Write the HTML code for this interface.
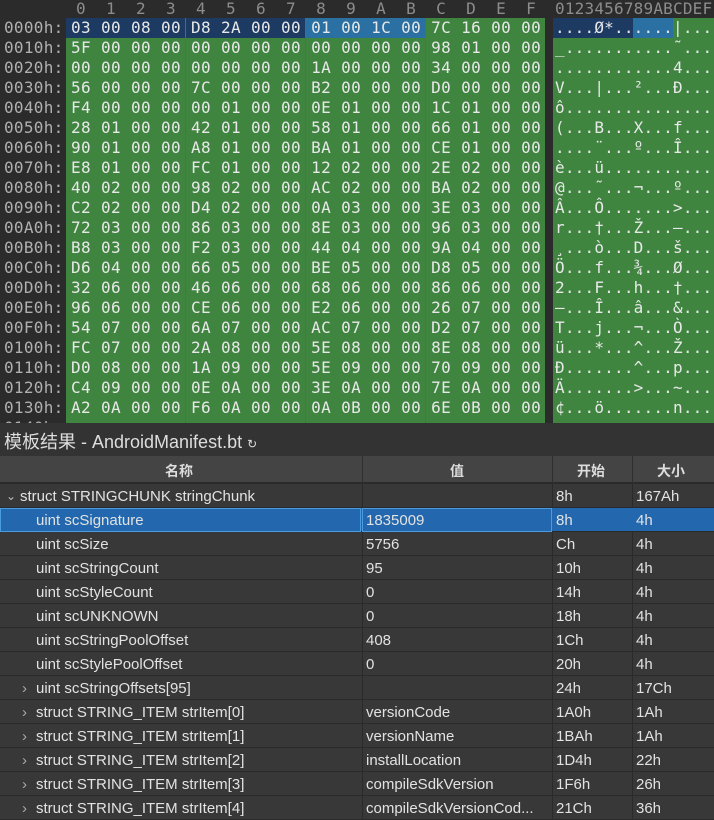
<!DOCTYPE html>
<html><head><meta charset="utf-8"><style>
*{margin:0;padding:0;box-sizing:border-box}
body{width:714px;height:818px;overflow:hidden;background:#2b2b2b;position:relative;font-family:"DejaVu Sans Mono",monospace}
.abs{position:absolute}
.hex{position:absolute;left:71px;font-size:16px;letter-spacing:0.37px;color:#e8e8e8;white-space:pre;line-height:20px}
.off{position:absolute;left:4px;font-size:16px;letter-spacing:0.3px;color:#b0b0b0;white-space:pre;line-height:20px}
.asc{position:absolute;left:555px;font-size:16px;letter-spacing:0.2px;color:#e8e8e8;white-space:pre;line-height:20px}
.t{font-family:"Liberation Sans","Noto Sans CJK SC",sans-serif;font-size:15px;color:#e2e2e2}
.row{position:absolute;left:0;width:714px;height:24px;background:#383838;border-bottom:1px solid #2a2a2a}
.row span{position:absolute;top:4px;white-space:nowrap}
.cl{position:absolute;top:0;width:1px;height:24px;background:#2a2a2a}
</style></head><body>
<div class="abs" style="left:66px;top:18px;width:479px;height:405px;background:#3f8540"></div>
<div class="abs" style="left:553px;top:18px;width:161px;height:405px;background:#3f8540"></div>
<div class="abs" style="left:66px;top:18px;width:239px;height:20px;background:#1d3a63"></div>
<div class="abs" style="left:305px;top:18px;width:120px;height:20px;background:#2b70a3"></div>
<div class="abs" style="left:553px;top:18px;width:80px;height:20px;background:#1d3a63"></div>
<div class="abs" style="left:633px;top:18px;width:40px;height:20px;background:#2b70a3"></div>
<div class="abs" style="left:185px;top:18px;width:1px;height:405px;background:#5a6a5a"></div>
<div class="abs" style="left:305px;top:18px;width:1px;height:405px;background:#5a6a5a"></div>
<div class="abs" style="left:425px;top:18px;width:1px;height:405px;background:#5a6a5a"></div>
<div class="hex" style="top:-1px;left:76px;color:#8c8c8c">0  1  2  3  4  5  6  7  8  9  A  B  C  D  E  F</div>
<div class="asc" style="top:-1px;color:#8c8c8c">0123456789ABCDEF</div>
<div class="off" style="top:18px">0000h:
0010h:
0020h:
0030h:
0040h:
0050h:
0060h:
0070h:
0080h:
0090h:
00A0h:
00B0h:
00C0h:
00D0h:
00E0h:
00F0h:
0100h:
0110h:
0120h:
0130h:
0140h:</div>
<div class="hex" style="top:18px">03 00 08 00 D8 2A 00 00 01 00 1C 00 7C 16 00 00
5F 00 00 00 00 00 00 00 00 00 00 00 98 01 00 00
00 00 00 00 00 00 00 00 1A 00 00 00 34 00 00 00
56 00 00 00 7C 00 00 00 B2 00 00 00 D0 00 00 00
F4 00 00 00 00 01 00 00 0E 01 00 00 1C 01 00 00
28 01 00 00 42 01 00 00 58 01 00 00 66 01 00 00
90 01 00 00 A8 01 00 00 BA 01 00 00 CE 01 00 00
E8 01 00 00 FC 01 00 00 12 02 00 00 2E 02 00 00
40 02 00 00 98 02 00 00 AC 02 00 00 BA 02 00 00
C2 02 00 00 D4 02 00 00 0A 03 00 00 3E 03 00 00
72 03 00 00 86 03 00 00 8E 03 00 00 96 03 00 00
B8 03 00 00 F2 03 00 00 44 04 00 00 9A 04 00 00
D6 04 00 00 66 05 00 00 BE 05 00 00 D8 05 00 00
32 06 00 00 46 06 00 00 68 06 00 00 86 06 00 00
96 06 00 00 CE 06 00 00 E2 06 00 00 26 07 00 00
54 07 00 00 6A 07 00 00 AC 07 00 00 D2 07 00 00
FC 07 00 00 2A 08 00 00 5E 08 00 00 8E 08 00 00
D0 08 00 00 1A 09 00 00 5E 09 00 00 70 09 00 00
C4 09 00 00 0E 0A 00 00 3E 0A 00 00 7E 0A 00 00
A2 0A 00 00 F6 0A 00 00 0A 0B 00 00 6E 0B 00 00</div>
<div class="asc" style="top:18px">....Ø*......|...
_...........˜...
............4...
V...|...²...Ð...
ô...............
(...B...X...f...
....¨...º...Î...
è...ü...........
@...˜...¬...º...
Â...Ô.......>...
r...†...Ž...–...
¸...ò...D...š...
Ö...f...¾...Ø...
2...F...h...†...
–...Î...â...&...
T...j...¬...Ò...
ü...*...^...Ž...
Ð.......^...p...
Ä.......>...~...
¢...ö.......n...</div>
<div class="abs" style="left:0;top:423px;width:714px;height:33px;background:#333"></div>
<div class="abs t" style="left:4px;top:428px;font-size:18px;color:#ddd">模板结果 - AndroidManifest.bt <span style="font-size:12px">↻</span></div>
<div class="abs" style="left:0;top:456px;width:714px;height:27px;background:#444;border-bottom:1px solid #2a2a2a"></div>
<div class="abs t" style="left:165px;top:461px;font-weight:bold;font-size:14px;color:#ddd">名称</div>
<div class="abs t" style="left:450px;top:461px;font-weight:bold;font-size:14px;color:#ddd">值</div>
<div class="abs t" style="left:577px;top:461px;font-weight:bold;font-size:14px;color:#ddd">开始</div>
<div class="abs t" style="left:657px;top:461px;font-weight:bold;font-size:14px;color:#ddd">大小</div>
<div class="abs" style="left:362px;top:456px;width:1px;height:27px;background:#2f2f2f"></div>
<div class="abs" style="left:552px;top:456px;width:1px;height:27px;background:#2f2f2f"></div>
<div class="abs" style="left:632px;top:456px;width:1px;height:27px;background:#2f2f2f"></div>
<div class="abs" style="left:0;top:484px;width:714px;height:334px;font-family:'Liberation Sans',sans-serif;font-size:15px;color:#e2e2e2">
<div class="row" style="top:0"><span style="left:6px;color:#bbb;font-size:12px;top:5px">&#8964;</span><span style="left:20px">struct STRINGCHUNK stringChunk</span><span style="left:556px">8h</span><span style="left:636px">167Ah</span><i class="cl" style="left:362px"></i><i class="cl" style="left:552px"></i><i class="cl" style="left:632px"></i></div>
<div class="row" style="top:24px;background:#2368ae"><div style="position:absolute;left:0;top:0;width:361px;height:24px;border:1px solid #4a9be0"></div><div style="position:absolute;left:362px;top:0;width:190px;height:24px;border:1px solid #4a9be0"></div><span style="left:36px">uint scSignature</span><span style="left:366px">1835009</span><span style="left:556px">8h</span><span style="left:636px">4h</span></div>
<div class="row" style="top:48px"><span style="left:36px">uint scSize</span><span style="left:366px">5756</span><span style="left:556px">Ch</span><span style="left:636px">4h</span><i class="cl" style="left:362px"></i><i class="cl" style="left:552px"></i><i class="cl" style="left:632px"></i></div>
<div class="row" style="top:72px"><span style="left:36px">uint scStringCount</span><span style="left:366px">95</span><span style="left:556px">10h</span><span style="left:636px">4h</span><i class="cl" style="left:362px"></i><i class="cl" style="left:552px"></i><i class="cl" style="left:632px"></i></div>
<div class="row" style="top:96px"><span style="left:36px">uint scStyleCount</span><span style="left:366px">0</span><span style="left:556px">14h</span><span style="left:636px">4h</span><i class="cl" style="left:362px"></i><i class="cl" style="left:552px"></i><i class="cl" style="left:632px"></i></div>
<div class="row" style="top:120px"><span style="left:36px">uint scUNKNOWN</span><span style="left:366px">0</span><span style="left:556px">18h</span><span style="left:636px">4h</span><i class="cl" style="left:362px"></i><i class="cl" style="left:552px"></i><i class="cl" style="left:632px"></i></div>
<div class="row" style="top:144px"><span style="left:36px">uint scStringPoolOffset</span><span style="left:366px">408</span><span style="left:556px">1Ch</span><span style="left:636px">4h</span><i class="cl" style="left:362px"></i><i class="cl" style="left:552px"></i><i class="cl" style="left:632px"></i></div>
<div class="row" style="top:168px"><span style="left:36px">uint scStylePoolOffset</span><span style="left:366px">0</span><span style="left:556px">20h</span><span style="left:636px">4h</span><i class="cl" style="left:362px"></i><i class="cl" style="left:552px"></i><i class="cl" style="left:632px"></i></div>
<div class="row" style="top:192px"><span style="left:22px;color:#aaa">›</span><span style="left:36px">uint scStringOffsets[95]</span><span style="left:556px">24h</span><span style="left:636px">17Ch</span><i class="cl" style="left:362px"></i><i class="cl" style="left:552px"></i><i class="cl" style="left:632px"></i></div>
<div class="row" style="top:216px"><span style="left:22px;color:#aaa">›</span><span style="left:36px">struct STRING_ITEM strItem[0]</span><span style="left:366px">versionCode</span><span style="left:556px">1A0h</span><span style="left:636px">1Ah</span><i class="cl" style="left:362px"></i><i class="cl" style="left:552px"></i><i class="cl" style="left:632px"></i></div>
<div class="row" style="top:240px"><span style="left:22px;color:#aaa">›</span><span style="left:36px">struct STRING_ITEM strItem[1]</span><span style="left:366px">versionName</span><span style="left:556px">1BAh</span><span style="left:636px">1Ah</span><i class="cl" style="left:362px"></i><i class="cl" style="left:552px"></i><i class="cl" style="left:632px"></i></div>
<div class="row" style="top:264px"><span style="left:22px;color:#aaa">›</span><span style="left:36px">struct STRING_ITEM strItem[2]</span><span style="left:366px">installLocation</span><span style="left:556px">1D4h</span><span style="left:636px">22h</span><i class="cl" style="left:362px"></i><i class="cl" style="left:552px"></i><i class="cl" style="left:632px"></i></div>
<div class="row" style="top:288px"><span style="left:22px;color:#aaa">›</span><span style="left:36px">struct STRING_ITEM strItem[3]</span><span style="left:366px">compileSdkVersion</span><span style="left:556px">1F6h</span><span style="left:636px">26h</span><i class="cl" style="left:362px"></i><i class="cl" style="left:552px"></i><i class="cl" style="left:632px"></i></div>
<div class="row" style="top:312px"><span style="left:22px;color:#aaa">›</span><span style="left:36px">struct STRING_ITEM strItem[4]</span><span style="left:366px">compileSdkVersionCod...</span><span style="left:556px">21Ch</span><span style="left:636px">36h</span><i class="cl" style="left:362px"></i><i class="cl" style="left:552px"></i><i class="cl" style="left:632px"></i></div>
</div>
</body></html>
